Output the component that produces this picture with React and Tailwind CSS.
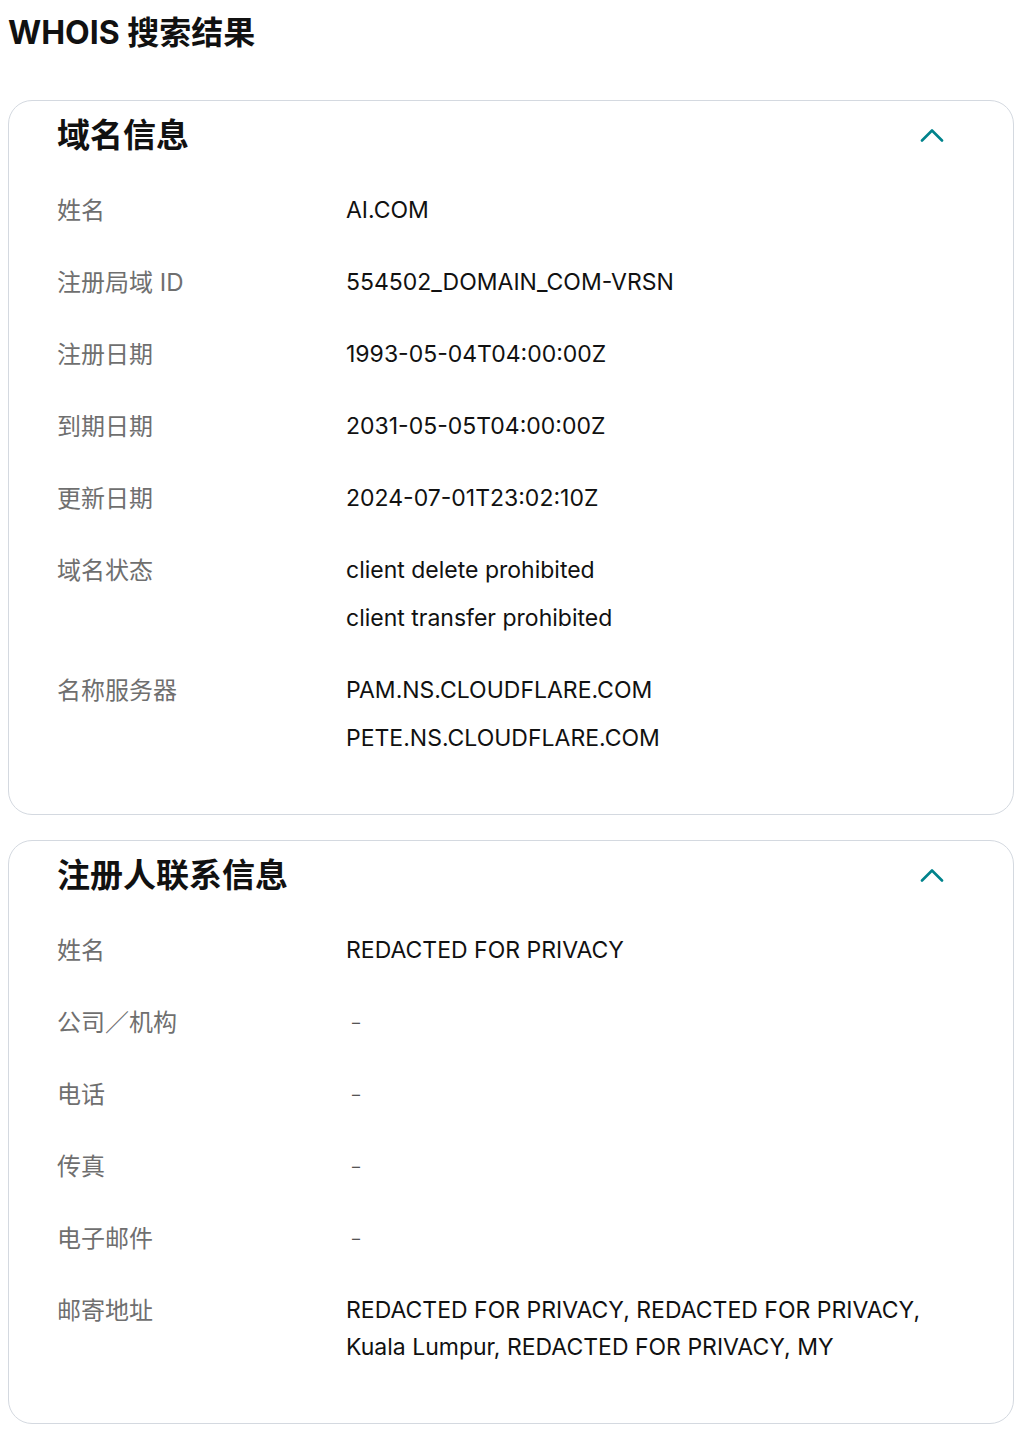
import React from 'react';

const domainRows = [
  { label: '姓名', values: ['AI.COM'] },
  { label: '注册局域 ID', values: ['554502_DOMAIN_COM-VRSN'] },
  { label: '注册日期', values: ['1993-05-04T04:00:00Z'] },
  { label: '到期日期', values: ['2031-05-05T04:00:00Z'] },
  { label: '更新日期', values: ['2024-07-01T23:02:10Z'] },
  { label: '域名状态', values: ['client delete prohibited', 'client transfer prohibited'] },
  { label: '名称服务器', values: ['PAM.NS.CLOUDFLARE.COM', 'PETE.NS.CLOUDFLARE.COM'] },
];

const registrantRows = [
  { label: '姓名', values: ['REDACTED FOR PRIVACY'] },
  { label: '公司／机构', values: ['–'], dash: true },
  { label: '电话', values: ['–'], dash: true },
  { label: '传真', values: ['–'], dash: true },
  { label: '电子邮件', values: ['–'], dash: true },
  {
    label: '邮寄地址',
    values: ['REDACTED FOR PRIVACY, REDACTED FOR PRIVACY, Kuala Lumpur, REDACTED FOR PRIVACY, MY'],
  },
];

function Chevron() {
  return (
    <svg width="24" height="14" viewBox="0 0 24 14" fill="none">
      <path d="M2 12.5 L12 2.5 L22 12.5" stroke="#00838c" strokeWidth="2.6" strokeLinecap="round" strokeLinejoin="round" />
    </svg>
  );
}

function Section({ title, rows }) {
  return (
    <section className="rounded-[24px] border border-[#d4d9e0] bg-white pl-[48px] pr-[69px] pt-[14px] pb-[22px]">
      <div className="flex items-center justify-between">
        <h2 className="text-[33px] font-bold leading-[40px] text-[#111]">{title}</h2>
        <Chevron />
      </div>
      <div className="mt-[37px] flex flex-col">
        {rows.map((row) => (
          <div key={row.label} className="mb-[35px] flex">
            <div className="w-[289px] shrink-0 text-[24px] leading-[37px] text-[#6f6f6f]">{row.label}</div>
            <div className="flex flex-col gap-[11px] text-[23px] leading-[37px] text-[#111]">
              {row.values.map((v) => (
                <div key={v} className={row.dash ? 'pl-[6px] text-[16px] text-[#555]' : ''}>
                  {v}
                </div>
              ))}
            </div>
          </div>
        ))}
      </div>
    </section>
  );
}

export default function App() {
  return (
    <div className="min-h-screen bg-white pl-[8px] pr-[6px] pt-[12px] pb-[8px] font-['Inter','Noto_Sans_CJK_SC',sans-serif]">
      <h1 className="text-[32px] font-bold leading-[42px] text-[#111]">WHOIS 搜索结果</h1>
      <div className="mt-[46px] flex flex-col gap-[25px]">
        <Section title="域名信息" rows={domainRows} />
        <Section title="注册人联系信息" rows={registrantRows} />
      </div>
    </div>
  );
}
